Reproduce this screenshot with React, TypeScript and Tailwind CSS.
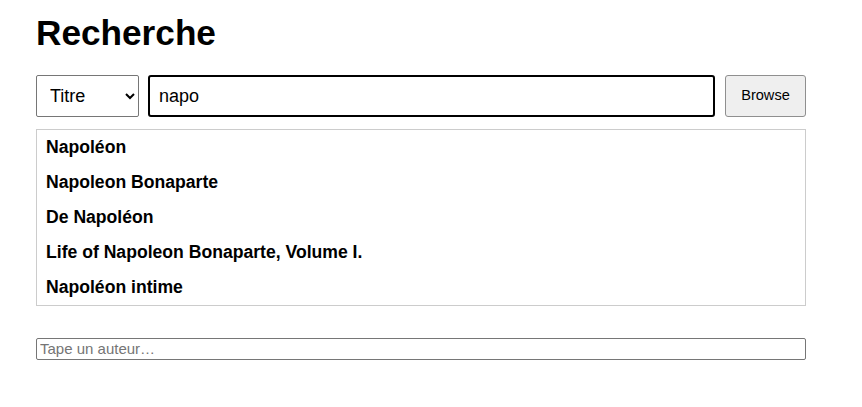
const results = [
  'Napoléon',
  'Napoleon Bonaparte',
  'De Napoléon',
  'Life of Napoleon Bonaparte, Volume I.',
  'Napoléon intime',
]

const App = () => {
  return (
    <div className="min-h-screen bg-white px-9 pt-[14px] font-['Liberation_Sans',Arial,sans-serif] text-black">
      <div className="w-[770px]">
        <h1 className="text-[35.2px] leading-[37px] font-bold">Recherche</h1>

        <div className="mt-[24px] flex items-stretch gap-[9px]">
          <select
            defaultValue="titre"
            className="h-[42px] w-[103px] rounded-[2px] border border-[#767676] bg-white pl-[9px] pr-1 text-[18px]"
          >
            <option value="titre">Titre</option>
            <option value="auteur">Auteur</option>
          </select>
          <input
            type="text"
            defaultValue="napo"
            className="h-[42px] flex-1 rounded-[3px] border-2 border-black px-[9px] text-[18px] outline-none"
          />
          <button className="ml-px h-[42px] w-[81px] rounded-[3px] border border-[#8f8f8f] bg-[#efefef] text-[14.6px]">
            Browse
          </button>
        </div>

        <ul className="mt-[12px] border border-[#cccccc]">
          {results.map((title) => (
            <li key={title} className="flex h-[35px] items-center px-[9px] text-[17.6px] font-bold">
              {title}
            </li>
          ))}
        </ul>

        <input
          type="text"
          placeholder="Tape un auteur…"
          className="mt-[32px] block h-[22px] w-full rounded-[2px] border border-[#767676] px-[3px] text-[15px] placeholder:text-[#757575]"
        />
      </div>
    </div>
  )
}

export default App
